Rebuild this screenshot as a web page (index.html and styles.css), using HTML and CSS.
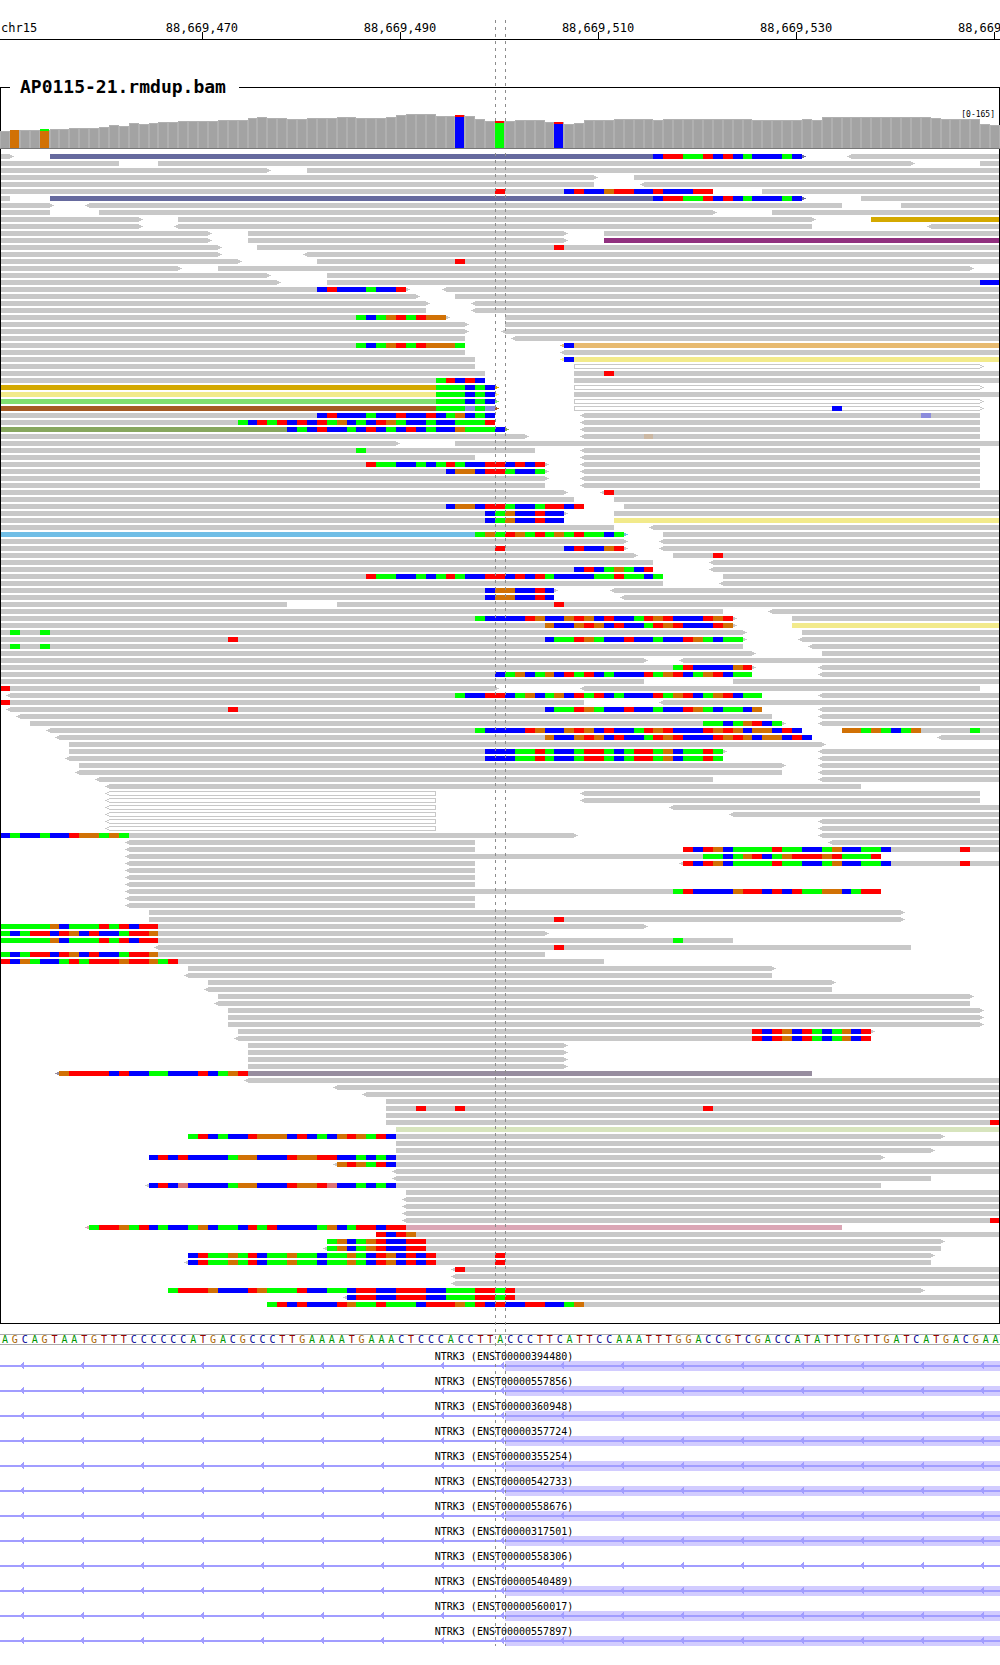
FILE: index.html
```html
<!DOCTYPE html>
<html lang="en">
<head>
<meta charset="utf-8">
<title>chr15 – AP0115-21.rmdup.bam</title>
<link rel="stylesheet" href="styles.css">
</head>
<body>
<main class="browser">
  <svg class="ruler" id="ruler" role="img" aria-label="Genomic ruler"></svg>

  <section class="alignment">
    <h1 class="alignment-title">AP0115-21.rmdup.bam</h1>
    <div class="coverage">
      <svg class="coverage-plot" id="coverage" role="img" aria-label="Read depth"></svg>
      <span class="coverage-range">[0-165]</span>
    </div>
    <svg class="reads" id="reads" role="img" aria-label="Aligned reads"></svg>
  </section>

  <div class="sequence" id="sequence"></div>

  <ol class="transcripts" id="transcripts">
    <li class="transcript"><span class="transcript-name">NTRK3 (ENST00000394480)</span></li>
    <li class="transcript"><span class="transcript-name">NTRK3 (ENST00000557856)</span></li>
    <li class="transcript"><span class="transcript-name">NTRK3 (ENST00000360948)</span></li>
    <li class="transcript"><span class="transcript-name">NTRK3 (ENST00000357724)</span></li>
    <li class="transcript"><span class="transcript-name">NTRK3 (ENST00000355254)</span></li>
    <li class="transcript"><span class="transcript-name">NTRK3 (ENST00000542733)</span></li>
    <li class="transcript"><span class="transcript-name">NTRK3 (ENST00000558676)</span></li>
    <li class="transcript"><span class="transcript-name">NTRK3 (ENST00000317501)</span></li>
    <li class="transcript intron-only"><span class="transcript-name">NTRK3 (ENST00000558306)</span></li>
    <li class="transcript"><span class="transcript-name">NTRK3 (ENST00000540489)</span></li>
    <li class="transcript"><span class="transcript-name">NTRK3 (ENST00000560017)</span></li>
    <li class="transcript"><span class="transcript-name">NTRK3 (ENST00000557897)</span></li>
  </ol>

  <div class="locus"></div>
</main>
<svg class="defs" aria-hidden="true">
  <defs>
    <pattern id="strand" width="60" height="10" patternUnits="userSpaceOnUse">
      <path d="M20 4h1v-1h1v-1h1v-1h1v7h-1v-1h-1v-1h-2z" fill="#a19dff"/>
    </pattern>
  </defs>
</svg>
<script src="script.js"></script>
</body>
</html>
```
FILE: styles.css
```css
* { box-sizing: border-box; }

body {
  margin: 0;
  background: #fff;
  color: #000;
  font-family: "DejaVu Sans Mono", "Liberation Mono", monospace;
}

svg {
  display: block;
  width: 100%;
}

.browser {
  position: relative;
  overflow: hidden;
}

.defs {
  position: absolute;
  width: 0;
  height: 0;
}

/* Ruler */
.ruler {
  height: 40px;
  border-bottom: 1px solid #000;
  font-size: 12px;
}

.ruler svg { overflow: visible; }
.tick-label { text-anchor: middle; }

/* Alignment panel */
.alignment {
  position: relative;
  margin-top: 36px;
  padding-bottom: 15px;
}

.alignment::after {
  content: "";
  position: absolute;
  inset: 11px 0 0;
  border: 1px solid #000;
  pointer-events: none;
}

.alignment-title {
  position: relative;
  z-index: 1;
  width: fit-content;
  margin: 0 0 0 10px;
  padding: 0 13px 0 10px;
  background: #fff;
  font-size: 18px;
  line-height: 22px;
}

.coverage {
  position: relative;
  z-index: 1;
  margin-bottom: 5px;
  border-bottom: 1px solid #777;
}

.coverage-plot { height: 50px; }
.coverage-range {
  position: absolute;
  top: 11px;
  right: 5px;
  font-size: 8px;
  line-height: 12px;
}

.coverage-plot,
.reads,
.track-glyph { shape-rendering: crispEdges; }
.coverage-plot svg,
.reads svg { overflow: visible; }

.bar-edge { fill: #b0b0b0; width: calc(100% / 101); }
.bar-core { fill: #a3a3a3; width: calc(100% / 101 - 2px); }
.bar-allele { width: calc(100% / 101 - 1px); }

/* Reads, coloured by mate chromosome */
.read-plain { fill: #c8c8c8; }
.read-hollow { fill: #c8c8c8; }
.read-slate { fill: #666a9e; }
.read-gold { fill: #d4a900; }
.read-purple { fill: #91307f; }
.read-peach { fill: #e7ba70; }
.read-yellow { fill: #f2ea8b; }
.read-lime { fill: #80df71; }
.read-brown { fill: #a55a25; }
.read-olive { fill: #87a75f; }
.read-sky { fill: #70bee6; }
.read-mauve { fill: #978d9f; }
.read-sage { fill: #d7e4bd; }
.read-pink { fill: #dba6b5; }
.read-inner { fill: #fff; }

.base-A { fill: #0f0; }
.base-C { fill: #00f; }
.base-G { fill: #d17105; }
.base-T { fill: #f00; }
.base-c { fill: #8c8cdc; }
.base-g { fill: #ccb8a3; }
.base-t { fill: #dc7575; }

/* Reference sequence */
.sequence {
  display: flex;
  margin-top: 10px;
  height: 11px;
  border-top: 1px solid #aaa;
  border-bottom: 1px solid #aaa;
  font-size: 10px;
  line-height: 10px;
}

.nucleotide {
  flex: 1 1 0;
  min-width: 0;
  text-align: center;
}

.nucleotide-A { color: #009600; }
.nucleotide-C { color: #000096; }
.nucleotide-G { color: #aa6400; }
.nucleotide-T { color: #960000; }

/* Transcripts */
.transcripts {
  display: flex;
  flex-direction: column;
  gap: 5px;
  margin: 0;
  padding: 6px 0 0;
  list-style: none;
}

.transcript {
  display: flex;
  flex-direction: column;
}

.transcript-name {
  z-index: 1;
  margin-bottom: -2px;
  padding-left: 8px;
  font-size: 10px;
  line-height: 12px;
  text-align: center;
}

.track-glyph { height: 10px; }
.exon { fill: #d2ccff; }
.intron { fill: #a19dff; }
.intron-only .exon { display: none; }

/* Dashed guides around the centre base */
.locus {
  position: absolute;
  z-index: 0;
  top: 20px;
  bottom: 0;
  left: calc(100% * 50 / 101);
  width: calc(100% / 101);
  pointer-events: none;
}

.locus::before,
.locus::after {
  content: "";
  position: absolute;
  top: 0;
  bottom: 0;
  width: 1px;
  background: repeating-linear-gradient(#8c8c8c 0 3px, transparent 3px 7px);
}

.locus::before { left: 0; }
.locus::after { left: 100%; }
```
FILE: script.js
```js
const COLUMNS = 101;
const ROW_PITCH = 7;
const READ_HEIGHT = 5;
const pct = (columns) => (columns / COLUMNS * 100).toFixed(5) + '%';
const byId = (id) => document.getElementById(id);

/* Ruler: one tick every 20 bases */
const ticks = [[20, '88,669,470'], [40, '88,669,490'], [60, '88,669,510'], [80, '88,669,530'], [100, '88,669,550']];
byId('ruler').innerHTML = '<text x="1" y="32">chr15</text>' + ticks.map(([column, label]) =>
  `<svg x="${pct(column + 0.5)}"><rect x="-1" y="32" width="1" height="8" shape-rendering="crispEdges"/>` +
  `<text class="tick-label" x="-1" y="32">${label}</text></svg>`).join('');

/* Coverage: [number of columns, bar height] */
const depthRuns = [[1, 17], [4, 18], [2, 19], [3, 20], [1, 21], [1, 23], [1, 22], [1, 25], [1, 24], [1, 25], [2, 26],
  [4, 27], [3, 28], [1, 30], [1, 31], [2, 30], [2, 29], [3, 30], [2, 31], [3, 30], [1, 31], [1, 33], [3, 34], [2, 32],
  [1, 33], [1, 32], [1, 29], [3, 27], [3, 28], [1, 26], [1, 26], [1, 24], [1, 25], [3, 28], [4, 29], [1, 28], [9, 29],
  [5, 28], [1, 29], [1, 28], [11, 31], [1, 30], [4, 29], [1, 24], [1, 23]];
/* Alleles stacked from the top of the bar; the last one fills the rest */
const alleles = { 1: [['G', 18]], 4: [['A', 2], ['G', 17]], 46: [['T', 2], ['C', 31]], 50: [['T', 2], ['A', 25]], 56: [['T', 2], ['C', 24]] };
const depths = depthRuns.flatMap(([count, height]) => Array(count).fill(height));
byId('coverage').innerHTML = depths.map((height, column) => {
  const top = 50 - height;
  if (!alleles[column]) {
    return `<svg x="${pct(column)}" width="100%"><rect class="bar-edge" y="${top}" height="${height}"/>` +
      `<rect class="bar-core" x="1" y="${top + 1}" height="${height - 1}"/></svg>`;
  }
  let y = 50 - alleles[column].reduce((sum, part) => sum + part[1], 0);
  return `<svg x="${pct(column)}" width="100%"><rect class="bar-edge" y="${top}" height="${height}"/>` +
    alleles[column].map(([base, size]) => {
      const rect = `<rect class="bar-allele base-${base}" y="${y}" height="${size}"/>`;
      y += size;
      return rect;
    }).join('') + '</svg>';
}).join('');

/* One line per row. "<a-b" / "a-b>" is a read with its strand, ":name" its colour,
   "n=ACGT" the mismatched bases from column n, in lower case where quality is low. */
const rows = `
0-1> 5-81>:slate 66=CTTAATCTCACCCAC <86-101
0-12 16-92> 99-101
0-27> 31-101
0-60> 64-101
0-60 <65-101
0-72 50=T 57=CTCCGTTCCTCCCTT 77-101
0-1 5-81>:slate 66=CTTAATCTCACCCAC 87-101
0-5> <9-85 91-101
0-5 10-72> 78-101
0-14> 18-82> 88-101:gold
0-14> <18-82 <94-101
0-21> 25-57> 61-101
0-21> 25-57> 61-101:purple
0-22> 26-101 56=T
0-22> <31-101
0-24> 32-101 46=T
0-18> 22-98>
0-27> 33-101
0-28> 33-101 99=CC
0-41> 32=CTCCCACCT <45-101
0-42> 46-101
0-43> <48-101
0-43 <48-101
0-45> 36=ACAGTATGG 51-101
0-47> 51-101
0-47> <51-101
0-47 <52-101
0-47 36=ACAGTATGGGA <57-101:peach 57=C
0-47 <57-101
0-48 <57-101:yellow 57=C
0-48 58-99>:hollow
0-49 58-101 61=T
0-49 44=ATCTC 58-101
0-50>:gold 44=AAACAC 58-99>:hollow
0-50>:yellow 44=AAACAC 58-101
0-50>:lime 44=AAACAC 58-99>:hollow
0-50>:brown 44=AAAcAc 58-99>:hollow 84=C
0-50 32=CTCCCACCTCCTCAGCAC <59-99 93=c
0-50 24=ACTATCTCTAGCACTGACCACCAAAT <59-99
0-51>:olive 29=CACTCCACTCACTCACCGAAAC <59-99
0-53> <59-99 65=g
0-40> 46-101
0-54 36=A <59-99
0-48 <59-99
0-55> 37=TAACCACATACCTTCTCT <59-99
0-55> 45=CGGCTTACCA <59-99
0-55> <59-99
0-55 <59-99
0-57> <61-101 61=T
0-58 62-101
0-59 45=CGGCTTACCATTCT 63-101
0-57> 49=CAGCCTCC 62-101
0-57 49=CAGCCTCC 62-101:yellow
0-62 <66-101
0-63>:sky 48=AGATGATAGATAACA 67-101
0-63> <67-101
0-63> 50=T 57=CTCCGT <67-101
0-64> 68-101 72=T
0-66 <72-101
0-66 58=CTCAGACT <72-101
0-67 37=TAACCACATACCTTCTCTACCCCAATAACA 73-101
0-67 <73-101
0-56> 49=CGGCCTC <62-101
0-56 49=CGGCCTC <63-101
0-29 34-101 56=T
0-73 <78-101
0-74> 48=ACCCCTGCCGTGCTCCATGTCCCTGT 80-101
0-74> 55=GCCGTGCTCCATGTCCCTG 80-101:yellow
0-75> 1=A 4=A 81-101
0-75> 23=T 55=CAATGACCTCCACCTGACAA <81-101
0-75 1=A 4=A <82-101
0-76> 83-101
0-65> <69-101
0-76> 68=ATCCCCGT <83-101
0-76 50=CAGCAGCTATCACCCTAGTCAGTCAA <83-101
0-65 74-101
0-50> 0=T <59-99
<1-77 46=ACCTTCAGCAGCTATCACCCTAGTCAGTCAA <83-101
0-59 0=T <67-101
<1-77 23=T 55=CAATGACCTCCACCTGACAACG <83-101
<2-78 <83-101
3-79> 71=AACAGTCA <83-101
<5-81 48=ACCCCTGCCGTGCTCCATGTCCCTGTGCGGCTC 85-101 85=GGAGACAG 98=A
<6-82 55=GCCGTGCTCCATGTCCCTGTGCGGCTC <95-101
7-83>
7-73> 49=CCCAATACCATTACATTAGCAATA <83-101
<7-73 49=CCCAATACCATTACATTAGCAATA <83-101
8-79> <83-101
<8-79 <83-101
<10-72 <83-101
<11-87
<11-44:hollow <59-99
<11-44:hollow <59-99
<11-44:hollow <68-101
<11-44:hollow <74-101
<11-44:hollow <83-101
<11-44:hollow <83-101
0-58> 0=CACCACCTGGAGA <83-101
<13-48 <84-101
<13-48 69-101 69=TCTGCAAAATAACCAGCCAAC 97=T
<13-89 71=AACAGTCAGTTTGTAAAT
<13-48 <69-101 69=TCTGCAAAATAACCAGCCAAC 97=T
<13-48
<13-48
<13-48
<13-89 68=ATCCCCGTTCTCTAAGGCATT
<13-48
<13-48
15-91>
15-91> 56=T
0-65> 0=AAAAAGCAAATATCTT
0-55> 0=ACATTCTGCTCCATTG
0-74 0=AAAAAGCAAATATCTT 68=A
<16-92 56=T
0-55 0=ACATTCTGCTCCATTG
0-61 0=TCGACCATATTTGTTGAT
19-78>
<19-78
21-84>
<21-84
22-98>
<22-98
23-99>
23-99>
23-99>
24-88> 76=TCTGCTACAGCT
<24-88 76=TCTGCTACAGCT
25-57>
25-57>
25-57>
25-57>
<6-82:mauve 6=GTTTTCTCCAACCCTCAGT
<25-101
<34-101
<37-101
39-101
39-101 42=T 46=T 71=T
39-101
39-101 100=T
40-101:sage
19-95> 19=ATCACCTGGGCTCACGTGATC
40-101
40-94>
15-89> 15=CTCTCCCCAGGCCCTGGTTCCACAC
<34-101 34=GTGATC
<40-101
<40-94
<15-89 15=CTCtCCCCAGGCCCTGGTtCCACAC
41-101
<41-101
<41-101
<41-101
<41-101 100=T
<9-85:pink 9=ATTGATCACCAGCAACTATCCCCAGCATTCTT
38-101 38=TCTG
33-95> 33=AGCAGTCCTT
<33-95 33=AGCAGTCCTT
19-94> 19=CTAAGATCAAGAACAAGACTGCTCT 50=T
<19-94 19=CTAAGATCAAGAACAAGACTGCTCT 50=T
<46-101 46=T
<46-101
<46-101
17-93> 17=ATTTGCCCTGAAATCCAACTTCCTTTCCAAATTAT
<35-101 35=CTTCCTTTCCAAATTAT
27-101 27=ATCTCCCTGAATAAACTTTGATCTCCTTCCAG
`.trim().split('\n');

function drawRead([, left, from, to, right, colour = 'plain'], y) {
  const start = Number(from);
  const end = Number(to);
  const hollow = colour === 'hollow';
  let out = `<rect class="read-${colour}" x="${pct(start)}" y="${y}" width="${pct(end - start)}" height="${READ_HEIGHT}"/>`;
  if (hollow) {
    const x = left ? pct(start) : `calc(${pct(start)} + 1px)`;
    out += `<rect class="read-inner" style="x: ${x}; width: calc(${pct(end - start)} - 1px)" y="${y + 1}" height="3"/>`;
  }
  if (left || right) {
    const d = left ? 'M0 1h-2v1h-2v1h2v1h2z' : 'M0 1h2v1h2v1h-2v1h-2z';
    out += `<svg x="${pct(left ? start : end)}" y="${y}"><path class="read-${colour}" d="${d}"/>` +
      (hollow ? `<rect class="read-inner" x="${left ? -2 : 0}" y="2" width="2" height="1"/>` : '') + '</svg>';
  }
  return out;
}

function drawBases([, from, bases], y) {
  let column = Number(from);
  return bases.match(/(.)\1*/g).map((run) => {
    const rect = `<rect class="base-${run[0]}" x="${pct(column)}" y="${y}" width="${pct(run.length)}" height="${READ_HEIGHT}"/>`;
    column += run.length;
    return rect;
  }).join('');
}

const reads = byId('reads');
reads.style.height = rows.length * ROW_PITCH + 'px';
reads.innerHTML = rows.map((row, index) => row.split(' ').map((token) => {
  const read = token.match(/^(<?)(\d+)-(\d+)(>?)(?::(\w+))?$/);
  const y = index * ROW_PITCH;
  return read ? drawRead(read, y) : drawBases(token.match(/^(\d+)=(\w+)$/), y);
}).join('')).join('');

/* Reference sequence */
const reference = 'AGCAGTAATGTTTCCCCCCATGACGCCCTTGAAAATGAAACTCCCACCTTACCCTTCATTCCAAATTTGGACCGTCGACCATATTTGTTGATCATGACGAA';
byId('sequence').innerHTML = [...reference].map((base) =>
  `<span class="nucleotide nucleotide-${base}">${base}</span>`).join('');

/* Transcript glyphs: exon from column 51, intron line and strand arrows */
document.querySelectorAll('.transcript').forEach((item) => {
  item.insertAdjacentHTML('beforeend',
    `<svg class="track-glyph"><rect class="exon" x="${pct(51)}" width="${pct(50)}" height="10"/>` +
    '<rect class="intron" y="4" width="100%" height="2"/><rect width="100%" height="10" fill="url(#strand)"/></svg>');
});
```
